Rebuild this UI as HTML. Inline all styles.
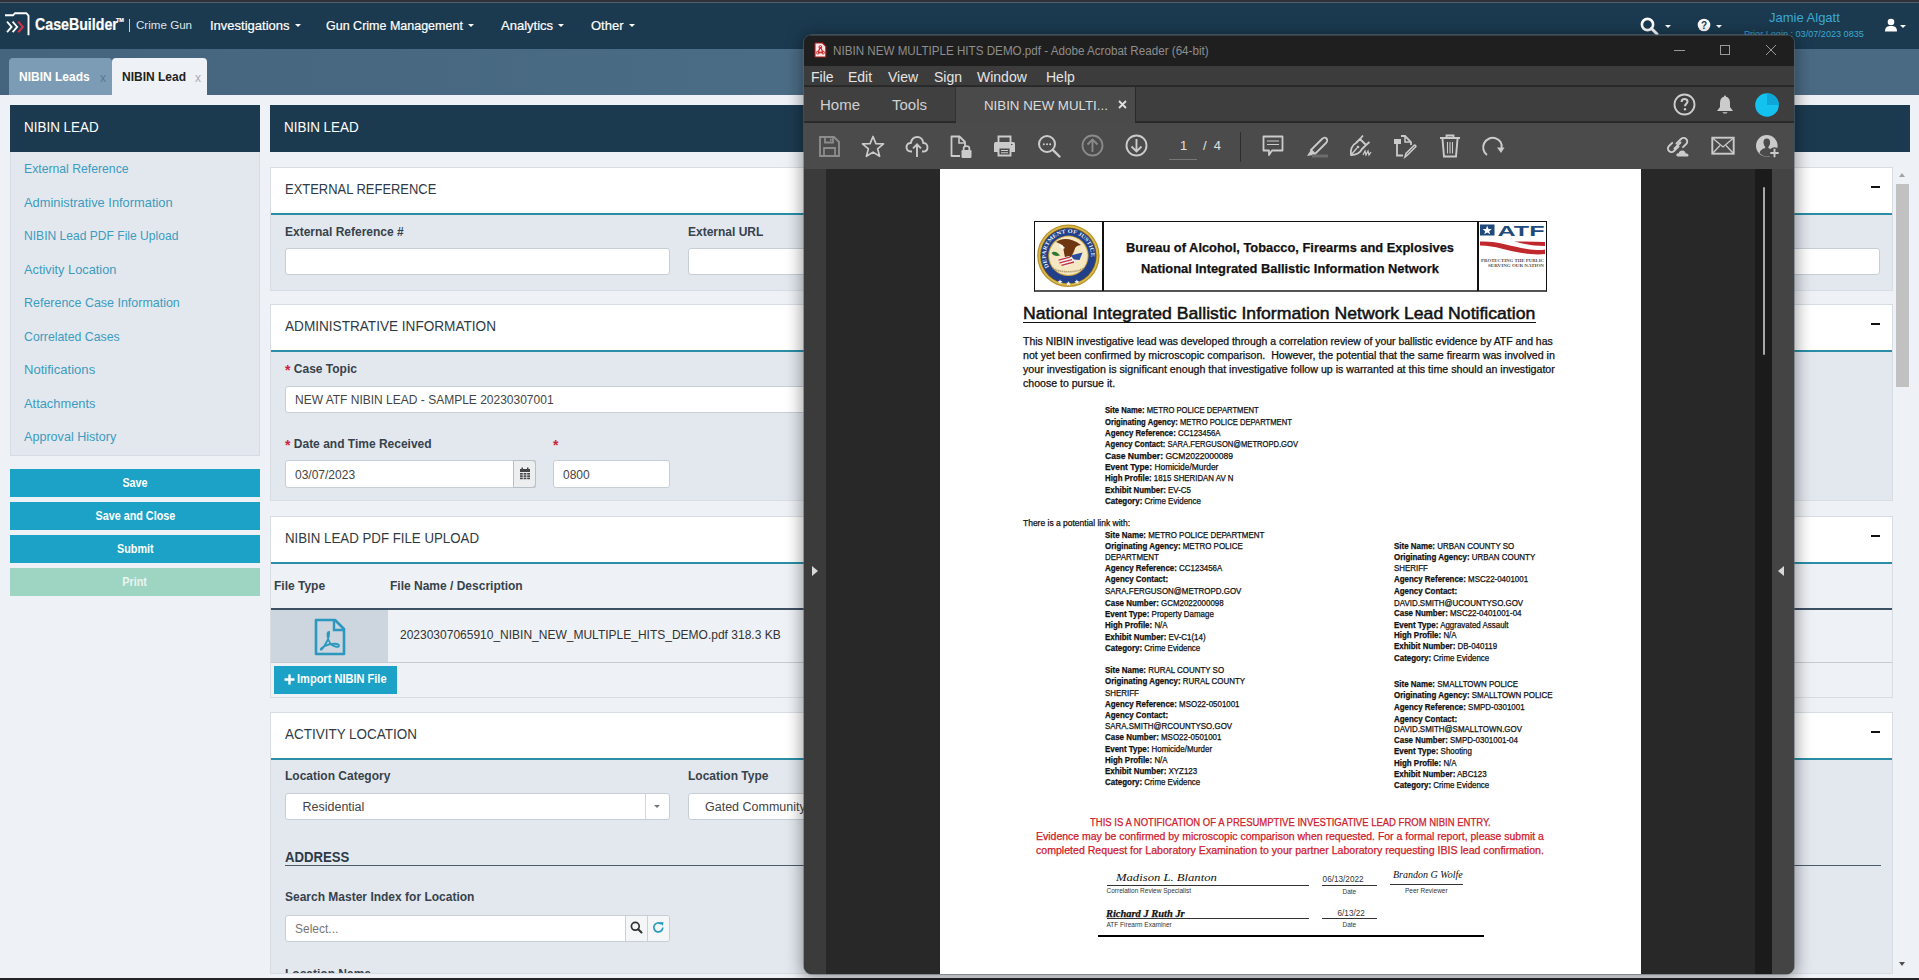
<!DOCTYPE html>
<html><head><meta charset="utf-8">
<style>
*{box-sizing:border-box;margin:0;padding:0}
html,body{width:1919px;height:980px;overflow:hidden;background:#eef1f5;font-family:"Liberation Sans",sans-serif;position:relative}
.a{position:absolute}
#topstrip{left:0;top:0;width:1919px;height:2px;background:#2e3137}
#nav{left:0;top:2px;width:1919px;height:47px;background:#1b3a50;border-top:1px solid #56606b}
.navtxt{color:#fff;font-size:13px;white-space:nowrap;-webkit-text-stroke:0.2px #fff}
.caret{display:inline-block;width:0;height:0;border-left:3px solid transparent;border-right:3px solid transparent;border-top:3.5px solid #fff;vertical-align:middle;margin-left:5px;margin-top:-2px}
#tabbar{left:0;top:49px;width:1919px;height:46px;background:linear-gradient(90deg,#45647d 0%,#4b6c85 40%,#4a6a83 100%)}
.tab{top:58px;height:37px;border-radius:4px 4px 0 0;font-size:12px;font-weight:bold;padding:12px 0 0 10px}
.side{left:10px;width:250px}
.hdr{background:#1c3a4f;color:#fff;font-size:14px;padding:13.5px 0 0 14px;height:47px}
.hdr span{display:inline-block;transform:scaleX(0.96);transform-origin:0 0}
.link{position:absolute;left:13px;color:#3b9cc0;font-size:12.2px}
.btn{position:absolute;left:0;width:250px;height:28px;background:#1ba2c6;color:#fff;font-size:12px;text-align:center;line-height:29px;font-weight:bold}
.btn span{display:inline-block;transform:scaleX(0.9)}
.card{position:absolute;left:270px;width:1623px;background:#e3e8ef;border:1px solid #d8dde3}
.chead{position:absolute;left:0;top:0;width:100%;height:47px;background:#fff;border-bottom:2px solid #2b8ea6;font-size:14px;color:#2f3a44;padding:12.5px 0 0 14px}
.chead span{display:inline-block;transform:scaleX(0.92);transform-origin:0 0;white-space:nowrap}
.lbl{position:absolute;font-size:12px;font-weight:bold;color:#37424c}
.inp{position:absolute;height:27px;background:#fff;border:1px solid #c8ced6;border-radius:3px;font-size:12px;color:#444;padding:6px 0 0 9px}
.req{color:#d0213a;font-size:14px;line-height:0;position:relative;top:1.5px}
.minus{position:absolute;width:9px;height:2px;background:#111}
</style></head><body>
<div class="a" id="topstrip"></div>
<div class="a" id="nav"></div>
<!-- logo -->
<svg class="a" style="left:4px;top:11px" width="28" height="26" viewBox="0 0 28 26">
<path d="M1 4.3 H9 L11 2.2 H22.3 L24.5 4.6 V24.3" fill="none" stroke="#fff" stroke-width="1.9" stroke-linejoin="round"/>
<path d="M3 10.6 L7.6 15.9 L3 21.2" fill="none" stroke="#fff" stroke-width="1.8"/>
<path d="M8.6 10.6 L13.2 15.9 L8.6 21.2" fill="none" stroke="#fff" stroke-width="1.8"/>
<path d="M14.2 10.6 L18.8 15.9 L14.2 21.2" fill="none" stroke="#d0304a" stroke-width="2.1"/>
</svg>
<div class="a navtxt" style="left:35px;top:15px;font-size:16.5px;font-weight:bold;transform:scaleX(0.86);transform-origin:0 0">CaseBuilder</div><div class="a navtxt" style="left:116px;top:17px;font-size:5.5px;font-weight:bold">TM</div>
<div class="a" style="left:129px;top:19px;width:1.2px;height:13px;background:#c8d0d8"></div>
<div class="a navtxt" style="left:136px;top:18px;font-size:11.6px;color:#dfe4ea;-webkit-text-stroke:0">Crime Gun</div>
<div class="a navtxt" style="left:210px;top:18px">Investigations<span class="caret"></span></div>
<div class="a navtxt" style="left:326px;top:18.7px;font-size:12.5px">Gun Crime Management<span class="caret"></span></div>
<div class="a navtxt" style="left:501px;top:18px">Analytics<span class="caret"></span></div>
<div class="a navtxt" style="left:591px;top:18px">Other<span class="caret"></span></div>


<svg class="a" style="left:1640px;top:17px" width="19" height="19" viewBox="0 0 19 19"><circle cx="7.5" cy="7.5" r="5.6" fill="none" stroke="#fff" stroke-width="2.6"/><path d="M11.5 11.5 L17 17" stroke="#fff" stroke-width="3" stroke-linecap="round"/></svg>
<div class="a caret" style="left:1665px;top:25px;margin:0;border-left-width:3.5px;border-right-width:3.5px;border-top-width:3.5px"></div>
<svg class="a" style="left:1697px;top:18px" width="14" height="14" viewBox="0 0 14 14"><circle cx="7" cy="7" r="6.3" fill="#fff"/><text x="7" y="11" font-family="Liberation Sans" font-weight="bold" font-size="10" fill="#1c3a52" text-anchor="middle">?</text></svg>
<div class="a caret" style="left:1716px;top:25px;margin:0;border-left-width:3.5px;border-right-width:3.5px;border-top-width:3.5px"></div>
<div class="a" style="left:1769px;top:10px;font-size:13px;color:#3ba9d3;white-space:nowrap">Jamie Algatt</div>
<div class="a" style="left:1744px;top:29px;font-size:9.1px;color:#3ba9d3;white-space:nowrap">Prior Login : 03/07/2023 0835</div>
<svg class="a" style="left:1884px;top:18px" width="14" height="14" viewBox="0 0 14 14"><circle cx="7" cy="4" r="3.3" fill="#fff"/><path d="M1 13.5 C1 9 3.5 8 7 8 C10.5 8 13 9 13 13.5 Z" fill="#fff"/></svg>
<div class="a caret" style="left:1900px;top:25px;margin:0;border-left-width:3.5px;border-right-width:3.5px;border-top-width:3.5px"></div>
<!-- page scrollbar -->
<div class="a" style="left:1895px;top:167px;width:15px;height:808px;background:#eef1f5"></div>
<div class="a" style="left:1899px;top:173px;border-left:3.5px solid transparent;border-right:3.5px solid transparent;border-bottom:4px solid #a3a3a3"></div>
<div class="a" style="left:1896px;top:184px;width:13px;height:203px;background:#c1c1c1"></div>
<div class="a" style="left:1899px;top:962px;border-left:3.5px solid transparent;border-right:3.5px solid transparent;border-top:4px solid #505050"></div>
<div class="a" style="left:0;top:978px;width:1919px;height:2px;background:#222427"></div>
<div class="a" id="tabbar"></div>
<div class="a tab" style="left:9px;width:103px;background:#7b9cb4;color:#fff">NIBIN Leads<span style="position:absolute;left:91px;top:13px;font-weight:normal;color:#5a7890;font-size:12px">x</span></div>
<div class="a tab" style="left:112px;width:95px;background:#eef1f5;color:#222">NIBIN Lead<span style="position:absolute;left:83px;top:13px;font-weight:normal;color:#aab;font-size:12px">x</span></div>

<!-- sidebar -->
<div class="a side hdr" style="top:105px"><span>NIBIN LEAD</span></div>
<div class="a side" style="top:152px;height:304px;background:#e3e8ef;border:1px solid #d6dce3;border-top:none">
<div class="link" style="top:10px;transform:scaleX(1.002);transform-origin:0 0">External Reference</div>
<div class="link" style="top:44px;transform:scaleX(1.055);transform-origin:0 0">Administrative Information</div>
<div class="link" style="top:77px;transform:scaleX(0.991);transform-origin:0 0">NIBIN Lead PDF File Upload</div>
<div class="link" style="top:111px;transform:scaleX(1.049);transform-origin:0 0">Activity Location</div>
<div class="link" style="top:144px;transform:scaleX(1.022);transform-origin:0 0">Reference Case Information</div>
<div class="link" style="top:178px;transform:scaleX(1.009);transform-origin:0 0">Correlated Cases</div>
<div class="link" style="top:211px;transform:scaleX(1.072);transform-origin:0 0">Notifications</div>
<div class="link" style="top:245px;transform:scaleX(1.055);transform-origin:0 0">Attachments</div>
<div class="link" style="top:278px;transform:scaleX(1.033);transform-origin:0 0">Approval History</div>
</div>
<div class="a side" style="top:469px;height:130px">
<div class="btn" style="top:0"><span>Save</span></div>
<div class="btn" style="top:33px"><span>Save and Close</span></div>
<div class="btn" style="top:66px"><span>Submit</span></div>
<div class="btn" style="top:99px;background:#9dd4c2;color:#e9f5f1"><span>Print</span></div>
</div>

<!-- main -->
<div class="a hdr" style="left:270px;top:105px;width:1640px"><span>NIBIN LEAD</span></div>


<!-- card 1 external ref -->
<div class="card" style="top:167px;height:124px">
 <div class="chead"><span style="transform:scaleX(0.925)">EXTERNAL REFERENCE</span></div>
 <div class="minus" style="left:1600px;top:18px"></div>
 <div class="lbl" style="left:14px;top:57px">External Reference #</div>
 <div class="inp" style="left:14px;top:80px;width:385px"></div>
 <div class="lbl" style="left:417px;top:57px">External URL</div>
 <div class="inp" style="left:417px;top:80px;width:1192px"></div>
</div>
<!-- card 2 admin -->
<div class="card" style="top:304px;height:197px">
 <div class="chead"><span style="transform:scaleX(0.971)">ADMINISTRATIVE INFORMATION</span></div>
 <div class="minus" style="left:1600px;top:18px"></div>
 <div class="lbl" style="left:14px;top:57px"><span class="req">*</span> Case Topic</div>
 <div class="inp" style="left:14px;top:81px;width:1000px">NEW ATF NIBIN LEAD - SAMPLE 20230307001</div>
 <div class="lbl" style="left:14px;top:132px"><span class="req">*</span> Date and Time Received</div>
 <div class="lbl" style="left:282px;top:132px"><span class="req">*</span></div>
 <div class="inp" style="left:14px;top:155px;width:251px;height:28px;border-radius:3px 0 0 3px;padding-top:7px">03/07/2023</div>
 <div class="inp" style="left:242px;top:155px;width:23px;height:28px;background:#eceef0;border-radius:0 4px 4px 0;padding:0;border-color:#b9bfc6">
  <svg class="a" style="left:5px;top:6px" width="12" height="13" viewBox="0 0 12 13"><rect x="1" y="2" width="10" height="3" fill="#444"/><rect x="2.5" y="0.5" width="1.5" height="2.5" fill="#444"/><rect x="8" y="0.5" width="1.5" height="2.5" fill="#444"/><g fill="#444"><rect x="1" y="6" width="2.8" height="1.6"/><rect x="4.6" y="6" width="2.8" height="1.6"/><rect x="8.2" y="6" width="2.8" height="1.6"/><rect x="1" y="8.3" width="2.8" height="1.6"/><rect x="4.6" y="8.3" width="2.8" height="1.6"/><rect x="8.2" y="8.3" width="2.8" height="1.6"/><rect x="1" y="10.6" width="2.8" height="1.6"/><rect x="4.6" y="10.6" width="2.8" height="1.6"/><rect x="8.2" y="10.6" width="2.8" height="1.6"/></g></svg>
 </div>
 <div class="inp" style="left:282px;top:155px;width:117px;height:28px;padding-top:7px">0800</div>
</div>
<!-- card 3 upload -->
<div class="card" style="top:516px;height:182px;background:#eef1f5">
 <div class="chead"><span style="transform:scaleX(0.948)">NIBIN LEAD PDF FILE UPLOAD</span></div>
 <div class="minus" style="left:1600px;top:18px"></div>
 <div class="lbl" style="left:3px;top:62px">File Type</div>
 <div class="lbl" style="left:119px;top:62px">File Name / Description</div>
 <div class="a" style="left:0;top:91px;width:100%;height:2px;background:#3e5064"></div>
 <div class="a" style="left:0;top:93px;width:100%;height:53px;background:#eef1f5;border-bottom:1px solid #c4cbd3"></div>
 <div class="a" style="left:0;top:93px;width:117px;height:52px;background:#cdd5de"></div>
 <svg class="a" style="left:42px;top:101px" width="34" height="38" viewBox="0 0 34 38">
  <path d="M3 2 H22 L31 11 V36 H3 Z" fill="none" stroke="#2b98bf" stroke-width="2.6" stroke-linejoin="round"/>
  <path d="M21 2 V12 H31" fill="none" stroke="#2b98bf" stroke-width="2.4"/>
  <path d="M16 14 C13 14 15 22 17 25 C19 28 25 30 26 28 C27 25 18 25 12 28 C7 30 7 33 9 31 C11 29 17 20 16 14 Z" fill="none" stroke="#2b98bf" stroke-width="1.8"/>
 </svg>
 <div class="a" style="left:129px;top:111px;font-size:12px;color:#333">20230307065910_NIBIN_NEW_MULTIPLE_HITS_DEMO.pdf 318.3 KB</div>
 <div class="btn" style="left:3px;top:149px;width:123px;height:28px;font-size:12px;line-height:27px;text-align:left"><svg class="a" style="left:10px;top:8px" width="11" height="11" viewBox="0 0 11 11"><path d="M5.5 0.5 V10.5 M0.5 5.5 H10.5" stroke="#fff" stroke-width="2.4"/></svg><span style="position:absolute;left:23px;top:0;transform:scaleX(0.92);transform-origin:0 0">Import NIBIN File</span></div>
</div>
<!-- card 4 activity -->
<div class="card" style="top:712px;height:262px;overflow:hidden">
 <div class="chead"><span style="transform:scaleX(0.962)">ACTIVITY LOCATION</span></div>
 <div class="minus" style="left:1600px;top:18px"></div>
 <div class="lbl" style="left:14px;top:56px">Location Category</div>
 <div class="inp" style="left:14px;top:80px;width:385px;font-size:12.5px;padding:6px 0 0 16.5px">Residential</div>
 <div class="a" style="left:374px;top:81px;width:1px;height:25px;background:#d0d5db"></div>
 <div class="a" style="left:383px;top:92px;border-left:3px solid transparent;border-right:3px solid transparent;border-top:3px solid #777"></div>
 <div class="lbl" style="left:417px;top:56px">Location Type</div>
 <div class="inp" style="left:417px;top:80px;width:600px;font-size:12.5px;padding:6px 0 0 16px">Gated Community</div>
 <div class="a" style="left:14px;top:136px;font-size:14px;font-weight:bold;color:#2b3a48;transform:scaleX(0.94);transform-origin:0 0">ADDRESS</div>
 <div class="a" style="left:14px;top:152px;width:1596px;height:1px;background:#4a5b6b"></div>
 <div class="lbl" style="left:14px;top:177px">Search Master Index for Location</div>
 <div class="inp" style="left:14px;top:202px;width:385px;color:#777;padding:6px 0 0 9px">Select...</div>
 <div class="a" style="left:354px;top:203px;width:1px;height:25px;background:#ccd1d7"></div>
 <div class="a" style="left:376px;top:203px;width:1px;height:25px;background:#ccd1d7"></div>
 <div class="a" style="left:355px;top:203px;width:21px;height:25px;background:#f5f6f7"></div>
 <div class="a" style="left:377px;top:203px;width:21px;height:25px;background:#f5f6f7;border-radius:0 3px 3px 0"></div>
 <svg class="a" style="left:359px;top:208px" width="13" height="13" viewBox="0 0 13 13"><circle cx="5.3" cy="5.3" r="3.9" fill="none" stroke="#333" stroke-width="1.7"/><path d="M8.2 8.2 L11.5 11.5" stroke="#333" stroke-width="2" stroke-linecap="round"/></svg>
 <svg class="a" style="left:381px;top:208px" width="13" height="13" viewBox="0 0 13 13"><path d="M10.8 6.5 A4.5 4.5 0 1 1 9.2 3" fill="none" stroke="#2a9bc0" stroke-width="1.7"/><path d="M7.5 1 L11.5 1.2 L10.8 5 Z" fill="#2a9bc0"/></svg>
 <div class="lbl" style="left:14px;top:254px">Location Name</div>
</div>



<div class="a" id="acro" style="left:804px;top:35px;width:990px;height:939px;border-radius:8px;overflow:hidden;background:#282828;box-shadow:0 0 0 1px rgba(95,105,115,0.55),0 2px 16px 3px rgba(0,0,0,0.36)">
 <!-- title bar -->
 <div class="a" style="left:0;top:0;width:990px;height:31px;background:#1f1f1f;border-top:1px solid #3a3f46"></div>
 <svg class="a" style="left:10px;top:7px" width="13" height="16" viewBox="0 0 13 16"><path d="M1 1 H8.5 L11.8 4.3 V15 H1 Z" fill="#fbe8ea" stroke="#a81c1c" stroke-width="1.1" stroke-linejoin="round"/><path d="M6.4 5 L4 10.5 M6.4 5 L9 10.5 M4 10.5 H9" stroke="#d42a2a" stroke-width="1.3"/><circle cx="6.4" cy="5" r="1.4" fill="none" stroke="#d42a2a" stroke-width="1"/><circle cx="3.8" cy="10.6" r="1.4" fill="none" stroke="#d42a2a" stroke-width="1"/><circle cx="9.1" cy="10.6" r="1.4" fill="none" stroke="#d42a2a" stroke-width="1"/></svg>
 <div class="a" style="left:29px;top:9px;font-size:12px;color:#8e8e8e;white-space:nowrap;transform:scaleX(0.97);transform-origin:left">NIBIN NEW MULTIPLE HITS DEMO.pdf - Adobe Acrobat Reader (64-bit)</div>
 <div class="a" style="left:870px;top:15px;width:11px;height:1px;background:#999"></div>
 <div class="a" style="left:916px;top:10px;width:10px;height:10px;border:1px solid #999"></div>
 <svg class="a" style="left:961px;top:9px" width="12" height="12" viewBox="0 0 12 12"><path d="M1 1 L11 11 M11 1 L1 11" stroke="#999" stroke-width="1"/></svg>
 <!-- menu bar -->
 <div class="a" style="left:0;top:31px;width:990px;height:20px;background:#3c3c3c;border-bottom:1px solid #2a2a2a"></div>
 <div class="a" style="left:7px;top:34px;font-size:14px;color:#e4e4e4;white-space:nowrap;word-spacing:0px">
  <span style="position:absolute;left:0">File</span><span style="position:absolute;left:37px">Edit</span><span style="position:absolute;left:77px">View</span><span style="position:absolute;left:123px">Sign</span><span style="position:absolute;left:166px">Window</span><span style="position:absolute;left:235px">Help</span>
 </div>
 <!-- tab bar -->
 <div class="a" style="left:0;top:52px;width:990px;height:35px;background:#3e3e3e;border-bottom:1px solid #2b2b2b"></div>
 <div class="a" style="left:0;top:52px;width:152px;height:35px;background:#404040;border-bottom:1px solid #2b2b2b;border-right:1px solid #333"></div>
 <div class="a" style="left:152px;top:52px;width:179px;height:36px;background:#4a4a4a"></div>
 <div class="a" style="left:331px;top:52px;width:1px;height:35px;background:#2b2b2b"></div>
 <div class="a" style="left:16px;top:61px;font-size:15px;color:#d0d0d0">Home</div>
 <div class="a" style="left:88px;top:61px;font-size:15px;color:#d0d0d0">Tools</div>
 <div class="a" style="left:180px;top:62.5px;font-size:13.3px;color:#dcdcdc;white-space:nowrap">NIBIN NEW MULTI...</div>
 <svg class="a" style="left:314px;top:65px" width="9" height="9" viewBox="0 0 9 9"><path d="M1 1 L8 8 M8 1 L1 8" stroke="#e0e0e0" stroke-width="1.8"/></svg>
 <svg class="a" style="left:869px;top:58px" width="23" height="23" viewBox="0 0 23 23"><circle cx="11.5" cy="11.5" r="10" fill="none" stroke="#cbcbcb" stroke-width="1.9"/><path d="M8.6 9 C8.6 7 9.8 6 11.5 6 C13.3 6 14.5 7.1 14.5 8.7 C14.5 10.6 12 11 12 13.2" fill="none" stroke="#cbcbcb" stroke-width="2"/><circle cx="12" cy="16.3" r="1.2" fill="#cbcbcb"/></svg>
 <svg class="a" style="left:912px;top:59px" width="18" height="21" viewBox="0 0 18 21"><path d="M9 1.5 C9.8 1.5 10 2.2 10 2.8 C13 3.5 14 6 14 9 V13 L17 17 H1 L4 13 V9 C4 6 5 3.5 8 2.8 C8 2.2 8.2 1.5 9 1.5 Z" fill="#cbcbcb"/><path d="M6.5 18.2 H11.5 C11.5 20 6.5 20 6.5 18.2Z" fill="#cbcbcb"/></svg>
 <svg class="a" style="left:950px;top:57px" width="26" height="26" viewBox="0 0 26 26"><circle cx="13" cy="13" r="11.8" fill="#13c2ef"/><path d="M13 13 L13 1.2 A11.8 11.8 0 0 1 24.8 13 Z" fill="#0ea6d6"/></svg>
 <!-- toolbar -->
 <div class="a" style="left:0;top:88px;width:990px;height:46px;background:#4b4b4b"></div>
 <!-- save -->
 <svg class="a" style="left:15px;top:101px" width="21" height="21" viewBox="0 0 21 21"><path d="M1 1 H15 L20 6 V20 H1 Z" fill="none" stroke="#8c8c8c" stroke-width="1.9"/><path d="M6 1 V6.5 H14 V1" fill="none" stroke="#8c8c8c" stroke-width="1.8"/><rect x="11" y="2.5" width="1.5" height="2.5" fill="#8c8c8c"/><path d="M5 20 V12 H16 V20" fill="none" stroke="#8c8c8c" stroke-width="1.8"/></svg>
 <!-- star -->
 <svg class="a" style="left:57px;top:100px" width="24" height="23" viewBox="0 0 24 23"><path d="M12 1.5 L14.9 8.6 L22.5 8.9 L16.6 13.8 L18.6 21.3 L12 17.1 L5.4 21.3 L7.4 13.8 L1.5 8.9 L9.1 8.6 Z" fill="none" stroke="#cbcbcb" stroke-width="1.7" stroke-linejoin="round"/></svg>
 <!-- cloud up -->
 <svg class="a" style="left:101px;top:100px" width="24" height="23" viewBox="0 0 24 23"><path d="M7 16.5 H6 C3 16.5 1.5 14.5 1.5 12 C1.5 9.5 3.5 7.8 5.8 8 C6.5 4.5 9 2 12.2 2 C15.6 2 18 4.5 18.3 8 C20.7 8 22.5 9.8 22.5 12.2 C22.5 14.7 20.8 16.5 18 16.5 H17" fill="none" stroke="#cbcbcb" stroke-width="1.9"/><path d="M12 22 V9.5 M8 13.3 L12 9.3 L16 13.3" fill="none" stroke="#cbcbcb" stroke-width="1.9"/></svg>
 <!-- doc lock -->
 <svg class="a" style="left:146px;top:100px" width="23" height="24" viewBox="0 0 23 24"><path d="M10 21 H1.5 V1.5 H9.5 L15 7 V11" fill="none" stroke="#cbcbcb" stroke-width="1.8" stroke-linejoin="round"/><path d="M9 1.5 V8 H15" fill="none" stroke="#cbcbcb" stroke-width="1.6"/><rect x="11.5" y="15" width="10" height="8" rx="1.2" fill="#cbcbcb"/><path d="M13.7 15 V12.8 C13.7 10.5 19.3 10.5 19.3 12.8 V15" fill="none" stroke="#cbcbcb" stroke-width="1.8"/></svg>
 <!-- print -->
 <svg class="a" style="left:189px;top:100px" width="23" height="22" viewBox="0 0 23 22"><path d="M5.5 7 V1.5 H17.5 V7" fill="none" stroke="#cbcbcb" stroke-width="1.9"/><path d="M4.5 17 H1 V9 C1 7.5 2 7 3 7 H20 C21 7 22 7.5 22 9 V17 H18.5" fill="#cbcbcb"/><path d="M5.5 12.5 H17.5 V20.5 H5.5 Z" fill="#4b4b4b" stroke="#cbcbcb" stroke-width="1.9"/><path d="M8 15.5 H15 M8 17.8 H15" stroke="#cbcbcb" stroke-width="1.1"/><rect x="18" y="9" width="1.5" height="1" fill="#4b4b4b"/></svg>
 <!-- zoom -->
 <svg class="a" style="left:233px;top:99px" width="25" height="25" viewBox="0 0 25 25"><circle cx="10" cy="10" r="8" fill="none" stroke="#cbcbcb" stroke-width="2"/><path d="M15.8 15.8 L22.5 22.5" stroke="#cbcbcb" stroke-width="2.4" stroke-linecap="round"/><circle cx="6.8" cy="10.2" r="1" fill="#cbcbcb"/><circle cx="10" cy="10.2" r="1" fill="#cbcbcb"/><circle cx="13.2" cy="10.2" r="1" fill="#cbcbcb"/></svg>
 <!-- up -->
 <svg class="a" style="left:277px;top:99px" width="23" height="23" viewBox="0 0 23 23"><circle cx="11.5" cy="11.5" r="10" fill="none" stroke="#8a8a8a" stroke-width="1.8"/><path d="M11.5 18 V5.5 M6.5 10.5 L11.5 5.5 L16.5 10.5" fill="none" stroke="#8a8a8a" stroke-width="1.9"/></svg>
 <!-- down -->
 <svg class="a" style="left:321px;top:99px" width="23" height="23" viewBox="0 0 23 23"><circle cx="11.5" cy="11.5" r="10" fill="none" stroke="#cbcbcb" stroke-width="1.9"/><path d="M11.5 5 V17.5 M6.5 12.5 L11.5 17.5 L16.5 12.5" fill="none" stroke="#cbcbcb" stroke-width="1.9"/></svg>
 <div class="a" style="left:376px;top:103px;font-size:13px;color:#e0e0e0">1</div>
 <div class="a" style="left:365px;top:124px;width:28px;height:1px;background:#777"></div>
 <div class="a" style="left:399px;top:103px;font-size:13px;color:#e0e0e0">/&nbsp; 4</div>
 <div class="a" style="left:436px;top:97px;width:1px;height:30px;background:#2e2e2e"></div>
 <!-- comment -->
 <svg class="a" style="left:458px;top:100px" width="22" height="23" viewBox="0 0 22 23"><path d="M1.5 1.5 H20.5 V15.5 H10 L7 20 V15.5 H1.5 Z" fill="none" stroke="#cbcbcb" stroke-width="1.8" stroke-linejoin="round"/><path d="M5 6 H17 M5 9.5 H17" stroke="#cbcbcb" stroke-width="1.2"/></svg>
 <!-- highlighter -->
 <svg class="a" style="left:501px;top:100px" width="24" height="23" viewBox="0 0 24 23"><path d="M6 15 L17 4 C18.5 2.5 20.5 2.5 21.5 3.5 C22.5 4.5 22.5 6.5 21 8 L10 19 Z" fill="none" stroke="#cbcbcb" stroke-width="1.8"/><path d="M6 15 L10 19 L8 20 L2 21 L4.5 17 Z" fill="#cbcbcb"/><rect x="7" y="19.5" width="16" height="3" fill="#6c6c6c"/></svg>
 <!-- pen sign -->
 <svg class="a" style="left:545px;top:99px" width="25" height="24" viewBox="0 0 25 24"><path d="M2 21 C1 16 3 11 7 9 L11 5 L17 11 L13 15 C11 19 7 21 2 21 Z" fill="none" stroke="#cbcbcb" stroke-width="1.8" stroke-linejoin="round"/><path d="M11 5 L14 1.5 M17 11 L20.5 8" stroke="#cbcbcb" stroke-width="1.8"/><path d="M2 21 L8 14" stroke="#cbcbcb" stroke-width="1.3"/><circle cx="9" cy="13" r="1.3" fill="#cbcbcb"/><path d="M14 21 L16 17 L17 21 L19 17 L20 21 L22 18" fill="none" stroke="#cbcbcb" stroke-width="1.3"/></svg>
 <!-- edit doc -->
 <svg class="a" style="left:589px;top:99px" width="25" height="25" viewBox="0 0 25 25"><rect x="1" y="5" width="7" height="5" fill="#cbcbcb"/><path d="M4 10 V21.5 H10 M8 2 H12 L18 8 V11" fill="none" stroke="#cbcbcb" stroke-width="1.8"/><path d="M12 2 V8 H18" fill="none" stroke="#cbcbcb" stroke-width="1.5"/><path d="M12 23 L13 19.5 L21 11.5 C22 10.5 23.5 12 22.5 13 L14.5 21 Z" fill="none" stroke="#cbcbcb" stroke-width="1.6"/></svg>
 <!-- trash -->
 <svg class="a" style="left:635px;top:99px" width="22" height="24" viewBox="0 0 22 24"><path d="M1 4 H21" stroke="#cbcbcb" stroke-width="2"/><path d="M7.5 4 V1.5 H14.5 V4" fill="none" stroke="#cbcbcb" stroke-width="1.8"/><path d="M3.5 5 L5 22.5 H17 L18.5 5" fill="none" stroke="#cbcbcb" stroke-width="1.9"/><path d="M8.5 8 V19.5 M11 8 V19.5 M13.5 8 V19.5" stroke="#cbcbcb" stroke-width="1.1"/></svg>
 <!-- rotate -->
 <svg class="a" style="left:677px;top:100px" width="24" height="23" viewBox="0 0 24 23"><path d="M6 20 C2 17 1.5 12 3 8.5 C5 4 10 2 14.5 3.2 C19 4.5 21.5 9 20.5 13" fill="none" stroke="#cbcbcb" stroke-width="2"/><path d="M16 12.5 L23.5 12.5 L20 18 Z" fill="#cbcbcb"/></svg>
 <!-- link cloud -->
 <svg class="a" style="left:862px;top:99px" width="26" height="25" viewBox="0 0 26 25"><path d="M10.5 9.5 L15 5 C16.5 3.5 18.8 3.5 20.2 5 C21.6 6.4 21.6 8.6 20.2 10 L17 13.2 M12.5 12.5 L8 17 C6.6 18.4 4.4 18.4 3 17 C1.6 15.6 1.6 13.4 3 12 L6.2 8.8 M8.5 14.5 L14.5 8.5" fill="none" stroke="#cbcbcb" stroke-width="1.9" stroke-linecap="round"/><path d="M12 22.5 C10.5 22.5 10 21.3 10.5 20.3 C11 19.3 12 19.2 12.6 19.4 C13 17.5 14.5 16.3 16.5 16.5 C18.5 16.7 19.5 18 19.7 19.5 C21 19.3 22.5 20 22.5 21.2 C22.5 22 22 22.5 21 22.5 Z" fill="#cbcbcb"/></svg>
 <!-- mail -->
 <svg class="a" style="left:907px;top:101px" width="24" height="20" viewBox="0 0 24 20"><rect x="1.3" y="1.7" width="21.4" height="16" fill="none" stroke="#cbcbcb" stroke-width="1.9"/><path d="M1.5 2 L12 11 L22.5 2 M1.5 17.5 L9 9.5 M22.5 17.5 L15 9.5" fill="none" stroke="#cbcbcb" stroke-width="1.3"/></svg>
 <!-- user add -->
 <svg class="a" style="left:951px;top:99px" width="26" height="25" viewBox="0 0 26 25"><circle cx="11.8" cy="11.8" r="10.8" fill="#cbcbcb"/><path d="M11.8 4.5 C9.3 4.5 8.3 6.5 8.5 8.8 C8.7 10.8 9.5 12.2 10.2 12.8 V14 C7 15 5 16.5 4.5 19 C6.5 21.2 9 22.5 11.8 22.5 C14.5 22.5 16.8 21.3 18.5 19.5 C18 16.7 16.5 15 13.4 14 V12.8 C14.2 12.2 15 10.8 15.1 8.8 C15.3 6.5 14.3 4.5 11.8 4.5 Z" fill="#4b4b4b"/><circle cx="19.5" cy="19" r="5.8" fill="#4b4b4b"/><path d="M19.5 14.8 V23.2 M15.3 19 H23.7" stroke="#cbcbcb" stroke-width="1.9"/></svg>

 <!-- content area -->
 <div class="a" style="left:0;top:134px;width:22px;height:806px;background:#3b3b3b"></div>
 <div class="a" style="left:8px;top:531px;border-top:5px solid transparent;border-bottom:5px solid transparent;border-left:6px solid #d8d8d8"></div>
 <div class="a" style="left:968px;top:134px;width:22px;height:806px;background:#444"></div>
 <div class="a" style="left:974px;top:531px;border-top:5px solid transparent;border-bottom:5px solid transparent;border-right:6px solid #d8d8d8"></div>
 <div class="a" style="left:951px;top:134px;width:17px;height:806px;background:#1b1b1b"></div>
 <div class="a" style="left:959px;top:152px;width:2px;height:168px;background:#a8a8a8;border-radius:1px"></div>
 <div class="a" id="page" style="left:136px;top:134px;width:701px;height:806px;background:#fff;overflow:hidden">
 
 <style>.pl{position:absolute;white-space:pre;transform-origin:0 0;line-height:1;font-family:"Liberation Sans",sans-serif;-webkit-text-stroke:0.25px currentColor}</style>
 <div class="a" style="left:94px;top:52px;width:513px;height:71px;border:1.6px solid #111;border-bottom-color:#555;border-bottom-width:2px"></div>
 <div class="a" style="left:162px;top:52px;width:1.6px;height:70px;background:#111"></div>
 <div class="a" style="left:537px;top:52px;width:1.6px;height:70px;background:#111"></div>
 <!-- seal -->
 <svg class="a" style="left:96px;top:54px" width="66" height="66" viewBox="0 0 66 66">
  <defs><path id="arc" d="M13.5 45 A22.6 22.6 0 1 1 51.3 45"/></defs>
  <circle cx="32.4" cy="32.8" r="31.2" fill="#b8902a"/>
  <circle cx="32.4" cy="32.8" r="30" fill="#d9b84a"/>
  <circle cx="32.4" cy="32.8" r="28.2" fill="#7a5a18"/>
  <circle cx="32.4" cy="32.8" r="27.5" fill="#22408a"/>
  <text font-family="Liberation Serif" font-weight="bold" font-size="5.6" fill="#e8ecf6"><textPath href="#arc" startOffset="1" textLength="84" lengthAdjust="spacingAndGlyphs">DEPARTMENT OF JUSTICE</textPath></text>
  <circle cx="32.4" cy="32.8" r="20.2" fill="#c9a43a"/>
  <circle cx="32.4" cy="32.8" r="19.2" fill="#f4e7c2"/>
  <path d="M20 19 C26 14.5 36 15 45 22 C41 22.5 39 24 38.5 27 C37 31 35 34 33 37 L29.5 36 C28 31 27.5 26 27 22.5 C25 21 22 20 20 19 Z" fill="#6e3611"/>
  <path d="M23 22 C26 22 28 23.5 29 25 L27 26 C25 25 23.5 23.5 23 22Z" fill="#fff" opacity="0.9"/>
  <path d="M21 36 L33 33 L40 38.5 L29 44 Z" fill="#f2f2f6"/>
  <path d="M22.5 37.2 L34 34.2 M23.5 39.8 L36 36.6 M25.5 42.4 L38 39" stroke="#c8323c" stroke-width="1.3"/>
  <path d="M34.5 32.5 L46.5 29.5 L43.5 37 L38 36.5 Z" fill="#2a4da0"/>
  <path d="M15.5 30 C17.5 27.5 21.5 28.5 24 32.5 C20.5 33.5 17.5 33 15.5 30 Z" fill="#2f7a32"/>
  <path d="M17 45 C22 50 42 50 48 45" fill="none" stroke="#a89060" stroke-width="1.6" stroke-dasharray="1.2 0.8"/>
  <path d="M24 56.5 l0.8 1.6 1.7 0.1 -1.3 1.1 0.5 1.7 -1.7 -1 -1.5 1 0.4 -1.7 -1.3 -1.1 1.7 -0.1z M32.4 58.2 l0.8 1.6 1.7 0.1 -1.3 1.1 0.5 1.7 -1.7 -1 -1.5 1 0.4 -1.7 -1.3 -1.1 1.7 -0.1z M40.8 56.5 l0.8 1.6 1.7 0.1 -1.3 1.1 0.5 1.7 -1.7 -1 -1.5 1 0.4 -1.7 -1.3 -1.1 1.7 -0.1z" fill="#e8ecf6"/>
 </svg>
 <!-- ATF -->
 <svg class="a" style="left:539px;top:54px" width="68" height="48" viewBox="0 0 68 48">
  <rect x="1" y="1.5" width="14.5" height="11" fill="#1f4a7c"/>
  <path d="M8.2 2.8 L9.5 6 L12.8 6.1 L10.2 8.2 L11.1 11.3 L8.2 9.5 L5.3 11.3 L6.2 8.2 L3.6 6.1 L6.9 6 Z" fill="#fff"/>
  <text x="18.5" y="12.6" font-family="Liberation Sans" font-weight="bold" font-size="15.4" fill="#1f4a7c" textLength="47" lengthAdjust="spacingAndGlyphs">ATF</text>
  <path d="M1 18.5 C20 18 34 24 48 26 C55 27 61 27.5 66 26.5 L66 31 C58 32 50 31 43 30 C28 28 16 22.5 1 22.6 Z" fill="#c0282e"/>
  <path d="M35.5 18.5 C46 18.3 56 18.6 66 19 L66 23 C55 23 45 21 35.5 18.5 Z" fill="#c0282e"/>
  <text x="2" y="38.6" font-family="Liberation Serif" font-weight="bold" font-size="4.8" fill="#505050" textLength="63" lengthAdjust="spacingAndGlyphs">PROTECTING THE PUBLIC</text>
  <text x="9" y="44.2" font-family="Liberation Serif" font-weight="bold" font-size="4.8" fill="#505050" textLength="56" lengthAdjust="spacingAndGlyphs">SERVING OUR NATION</text>
 </svg>
<div class="pl" style="left:186.3px;top:72px;font-size:13.5px;font-weight:bold;color:#111;transform:scaleX(0.9525)">Bureau of Alcohol, Tobacco, Firearms and Explosives</div>
 <div class="pl" style="left:201.4px;top:93px;font-size:13.5px;font-weight:bold;color:#111;transform:scaleX(0.952)">National Integrated Ballistic Information Network</div>
 <!-- title -->
 <div class="pl" style="left:82.7px;top:136.3px;font-size:17px;color:#111;transform:scaleX(1.0366);-webkit-text-stroke:0.5px #111">National Integrated Ballistic Information Network Lead Notification</div>
 <div class="a" style="left:82.5px;top:152.6px;width:513px;height:1.3px;background:#111"></div>
 <div class="pl" style="left:165.0px;top:237.2px;font-size:8.4px;color:#111;transform:scaleX(0.9145)"><b>Site Name:</b> METRO POLICE DEPARTMENT</div>
<div class="pl" style="left:165.0px;top:248.5px;font-size:8.4px;color:#111;transform:scaleX(0.9134)"><b>Originating Agency:</b> METRO POLICE DEPARTMENT</div>
<div class="pl" style="left:165.0px;top:259.9px;font-size:8.4px;color:#111;transform:scaleX(0.9334)"><b>Agency Reference:</b> CC123456A</div>
<div class="pl" style="left:165.0px;top:271.3px;font-size:8.4px;color:#111;transform:scaleX(0.9070)"><b>Agency Contact:</b> SARA.FERGUSON@METROPD.GOV</div>
<div class="pl" style="left:165.0px;top:282.6px;font-size:8.4px;color:#111;transform:scaleX(1.0221)"><b>Case Number:</b> GCM2022000089</div>
<div class="pl" style="left:165.0px;top:294.0px;font-size:8.4px;color:#111;transform:scaleX(1.0040)"><b>Event Type:</b> Homicide/Murder</div>
<div class="pl" style="left:165.0px;top:305.3px;font-size:8.4px;color:#111;transform:scaleX(0.9369)"><b>High Profile:</b> 1815 SHERIDAN AV N</div>
<div class="pl" style="left:165.0px;top:316.7px;font-size:8.4px;color:#111;transform:scaleX(0.9417)"><b>Exhibit Number:</b> EV-C5</div>
<div class="pl" style="left:165.0px;top:328.1px;font-size:8.4px;color:#111;transform:scaleX(0.9548)"><b>Category:</b> Crime Evidence</div>
<div class="pl" style="left:165.0px;top:362.2px;font-size:8.4px;color:#111;transform:scaleX(0.9475)"><b>Site Name:</b> METRO POLICE DEPARTMENT</div>
<div class="pl" style="left:165.0px;top:373.2px;font-size:8.4px;color:#111;transform:scaleX(0.9475)"><b>Originating Agency:</b> METRO POLICE</div>
<div class="pl" style="left:165.0px;top:384.0px;font-size:8.4px;color:#111;transform:scaleX(0.9475)">DEPARTMENT</div>
<div class="pl" style="left:165.0px;top:395.1px;font-size:8.4px;color:#111;transform:scaleX(0.9475)"><b>Agency Reference:</b> CC123456A</div>
<div class="pl" style="left:165.0px;top:406.3px;font-size:8.4px;color:#111;transform:scaleX(0.9475)"><b>Agency Contact:</b></div>
<div class="pl" style="left:165.0px;top:417.9px;font-size:8.4px;color:#111;transform:scaleX(0.9475)">SARA.FERGUSON@METROPD.GOV</div>
<div class="pl" style="left:165.0px;top:429.8px;font-size:8.4px;color:#111;transform:scaleX(0.9475)"><b>Case Number:</b> GCM2022000098</div>
<div class="pl" style="left:165.0px;top:440.8px;font-size:8.4px;color:#111;transform:scaleX(0.9475)"><b>Event Type:</b> Property Damage</div>
<div class="pl" style="left:165.0px;top:451.8px;font-size:8.4px;color:#111;transform:scaleX(0.9475)"><b>High Profile:</b> N/A</div>
<div class="pl" style="left:165.0px;top:463.6px;font-size:8.4px;color:#111;transform:scaleX(0.9475)"><b>Exhibit Number:</b> EV-C1(14)</div>
<div class="pl" style="left:165.0px;top:474.6px;font-size:8.4px;color:#111;transform:scaleX(0.9475)"><b>Category:</b> Crime Evidence</div>
<div class="pl" style="left:165.0px;top:497.2px;font-size:8.4px;color:#111;transform:scaleX(0.9475)"><b>Site Name:</b> RURAL COUNTY SO</div>
<div class="pl" style="left:165.0px;top:508.4px;font-size:8.4px;color:#111;transform:scaleX(0.9475)"><b>Originating Agency:</b> RURAL COUNTY</div>
<div class="pl" style="left:165.0px;top:520.1px;font-size:8.4px;color:#111;transform:scaleX(0.9475)">SHERIFF</div>
<div class="pl" style="left:165.0px;top:531.4px;font-size:8.4px;color:#111;transform:scaleX(0.9475)"><b>Agency Reference:</b> MSO22-0501001</div>
<div class="pl" style="left:165.0px;top:542.4px;font-size:8.4px;color:#111;transform:scaleX(0.9475)"><b>Agency Contact:</b></div>
<div class="pl" style="left:165.0px;top:553.3px;font-size:8.4px;color:#111;transform:scaleX(0.9475)">SARA.SMITH@RCOUNTYSO.GOV</div>
<div class="pl" style="left:165.0px;top:564.3px;font-size:8.4px;color:#111;transform:scaleX(0.9475)"><b>Case Number:</b> MSO22-0501001</div>
<div class="pl" style="left:165.0px;top:576.1px;font-size:8.4px;color:#111;transform:scaleX(0.9475)"><b>Event Type:</b> Homicide/Murder</div>
<div class="pl" style="left:165.0px;top:587.1px;font-size:8.4px;color:#111;transform:scaleX(0.9475)"><b>High Profile:</b> N/A</div>
<div class="pl" style="left:165.0px;top:598.4px;font-size:8.4px;color:#111;transform:scaleX(0.9475)"><b>Exhibit Number:</b> XYZ123</div>
<div class="pl" style="left:165.0px;top:609.2px;font-size:8.4px;color:#111;transform:scaleX(0.9475)"><b>Category:</b> Crime Evidence</div>
<div class="pl" style="left:454.0px;top:373.3px;font-size:8.4px;color:#111;transform:scaleX(0.9475)"><b>Site Name:</b> URBAN COUNTY SO</div>
<div class="pl" style="left:454.0px;top:384.3px;font-size:8.4px;color:#111;transform:scaleX(0.9475)"><b>Originating Agency:</b> URBAN COUNTY</div>
<div class="pl" style="left:454.0px;top:395.0px;font-size:8.4px;color:#111;transform:scaleX(0.9475)">SHERIFF</div>
<div class="pl" style="left:454.0px;top:406.3px;font-size:8.4px;color:#111;transform:scaleX(0.9475)"><b>Agency Reference:</b> MSC22-0401001</div>
<div class="pl" style="left:454.0px;top:417.9px;font-size:8.4px;color:#111;transform:scaleX(0.9475)"><b>Agency Contact:</b></div>
<div class="pl" style="left:454.0px;top:429.5px;font-size:8.4px;color:#111;transform:scaleX(0.9475)">DAVID.SMITH@UCOUNTYSO.GOV</div>
<div class="pl" style="left:454.0px;top:439.9px;font-size:8.4px;color:#111;transform:scaleX(0.9475)"><b>Case Number:</b> MSC22-0401001-04</div>
<div class="pl" style="left:454.0px;top:451.5px;font-size:8.4px;color:#111;transform:scaleX(0.9475)"><b>Event Type:</b> Aggravated Assault</div>
<div class="pl" style="left:454.0px;top:462.3px;font-size:8.4px;color:#111;transform:scaleX(0.9475)"><b>High Profile:</b> N/A</div>
<div class="pl" style="left:454.0px;top:473.0px;font-size:8.4px;color:#111;transform:scaleX(0.9475)"><b>Exhibit Number:</b> DB-040119</div>
<div class="pl" style="left:454.0px;top:485.4px;font-size:8.4px;color:#111;transform:scaleX(0.9475)"><b>Category:</b> Crime Evidence</div>
<div class="pl" style="left:454.0px;top:511.0px;font-size:8.4px;color:#111;transform:scaleX(0.9475)"><b>Site Name:</b> SMALLTOWN POLICE</div>
<div class="pl" style="left:454.0px;top:522.0px;font-size:8.4px;color:#111;transform:scaleX(0.9475)"><b>Originating Agency:</b> SMALLTOWN POLICE</div>
<div class="pl" style="left:454.0px;top:533.9px;font-size:8.4px;color:#111;transform:scaleX(0.9475)"><b>Agency Reference:</b> SMPD-0301001</div>
<div class="pl" style="left:454.0px;top:545.5px;font-size:8.4px;color:#111;transform:scaleX(0.9475)"><b>Agency Contact:</b></div>
<div class="pl" style="left:454.0px;top:556.2px;font-size:8.4px;color:#111;transform:scaleX(0.9475)">DAVID.SMITH@SMALLTOWN.GOV</div>
<div class="pl" style="left:454.0px;top:567.2px;font-size:8.4px;color:#111;transform:scaleX(0.9475)"><b>Case Number:</b> SMPD-0301001-04</div>
<div class="pl" style="left:454.0px;top:578.2px;font-size:8.4px;color:#111;transform:scaleX(0.9475)"><b>Event Type:</b> Shooting</div>
<div class="pl" style="left:454.0px;top:590.1px;font-size:8.4px;color:#111;transform:scaleX(0.9475)"><b>High Profile:</b> N/A</div>
<div class="pl" style="left:454.0px;top:601.1px;font-size:8.4px;color:#111;transform:scaleX(0.9475)"><b>Exhibit Number:</b> ABC123</div>
<div class="pl" style="left:454.0px;top:612.1px;font-size:8.4px;color:#111;transform:scaleX(0.9475)"><b>Category:</b> Crime Evidence</div>
<div class="pl" style="left:82.7px;top:350.3px;font-size:8.4px;color:#111;transform:scaleX(1.0126)">There is a potential link with:</div>
<div class="pl" style="left:82.7px;top:167.9px;font-size:10.0px;color:#111;transform:scaleX(1.0441)">This NIBIN investigative lead was developed through a correlation review of your ballistic evidence by ATF and has</div>
<div class="pl" style="left:82.7px;top:182.2px;font-size:10.0px;color:#111;transform:scaleX(1.0631)">not yet been confirmed by microscopic comparison.  However, the potential that the same firearm was involved in</div>
<div class="pl" style="left:82.7px;top:196.1px;font-size:10.0px;color:#111;transform:scaleX(1.0654)">your investigation is significant enough that investigative follow up is warranted at this time should an investigator</div>
<div class="pl" style="left:82.7px;top:209.7px;font-size:10.0px;color:#111;transform:scaleX(1.0552)">choose to pursue it.</div>
<div class="pl" style="left:149.6px;top:648.5px;font-size:10.0px;color:#d0202a;transform:scaleX(0.9505)">THIS IS A NOTIFICATION OF A PRESUMPTIVE INVESTIGATIVE LEAD FROM NIBIN ENTRY.</div>
<div class="pl" style="left:96.1px;top:662.7px;font-size:10.0px;color:#d0202a;transform:scaleX(1.0479)">Evidence may be confirmed by microscopic comparison when requested. For a formal report, please submit a</div>
<div class="pl" style="left:96.1px;top:676.7px;font-size:10.0px;color:#d0202a;transform:scaleX(1.0575)">completed Request for Laboratory Examination to your partner Laboratory requesting IBIS lead confirmation.</div>
 <!-- signatures -->
 <div class="a" style="left:166.5px;top:715.6px;width:202px;height:1px;background:#333"></div>
 <div class="a" style="left:381.8px;top:715.6px;width:55px;height:1px;background:#333"></div>
 <div class="a" style="left:449.6px;top:715.4px;width:73px;height:1px;background:#333"></div>
 <div class="a" style="left:166.5px;top:748.6px;width:202px;height:1px;background:#333"></div>
 <div class="a" style="left:381.8px;top:748.6px;width:55px;height:1px;background:#333"></div>
 <div class="a" style="left:157.9px;top:765.7px;width:386px;height:2.2px;background:#000"></div>
 <div class="pl" style="left:166.5px;top:719.3px;font-size:6.5px;color:#333;-webkit-text-stroke:0">Correlation Review Specialist</div>
 <div class="pl" style="left:402.5px;top:719.5px;font-size:6.5px;color:#333;-webkit-text-stroke:0">Date</div>
 <div class="pl" style="left:465px;top:719.3px;font-size:6.5px;color:#333;-webkit-text-stroke:0">Peer Reviewer</div>
 <div class="pl" style="left:166.5px;top:752.5px;font-size:6.5px;color:#333;-webkit-text-stroke:0">ATF Firearm Examiner</div>
 <div class="pl" style="left:402.5px;top:752.5px;font-size:6.5px;color:#333;-webkit-text-stroke:0">Date</div>
 <div class="pl" style="left:382.6px;top:707px;font-size:8.2px;color:#333;-webkit-text-stroke:0">06/13/2022</div>
 <div class="pl" style="left:397.5px;top:741px;font-size:8.2px;color:#333;-webkit-text-stroke:0">6/13/22</div>
 <div class="pl" style="left:176px;top:703px;font-size:11px;font-family:'Liberation Serif';font-style:italic;color:#111;transform:scaleX(1.15);-webkit-text-stroke:0">Madison L. Blanton</div>
 <div class="pl" style="left:453px;top:701px;font-size:10px;font-family:'Liberation Serif';font-style:italic;color:#111;-webkit-text-stroke:0">Brandon G Wolfe</div>
 <div class="pl" style="left:166px;top:739px;font-size:11px;font-family:'Liberation Serif';font-style:italic;font-weight:bold;color:#111;transform:scaleX(0.95)">Richard J Ruth Jr</div>

 </div>
</div>


</body></html>
